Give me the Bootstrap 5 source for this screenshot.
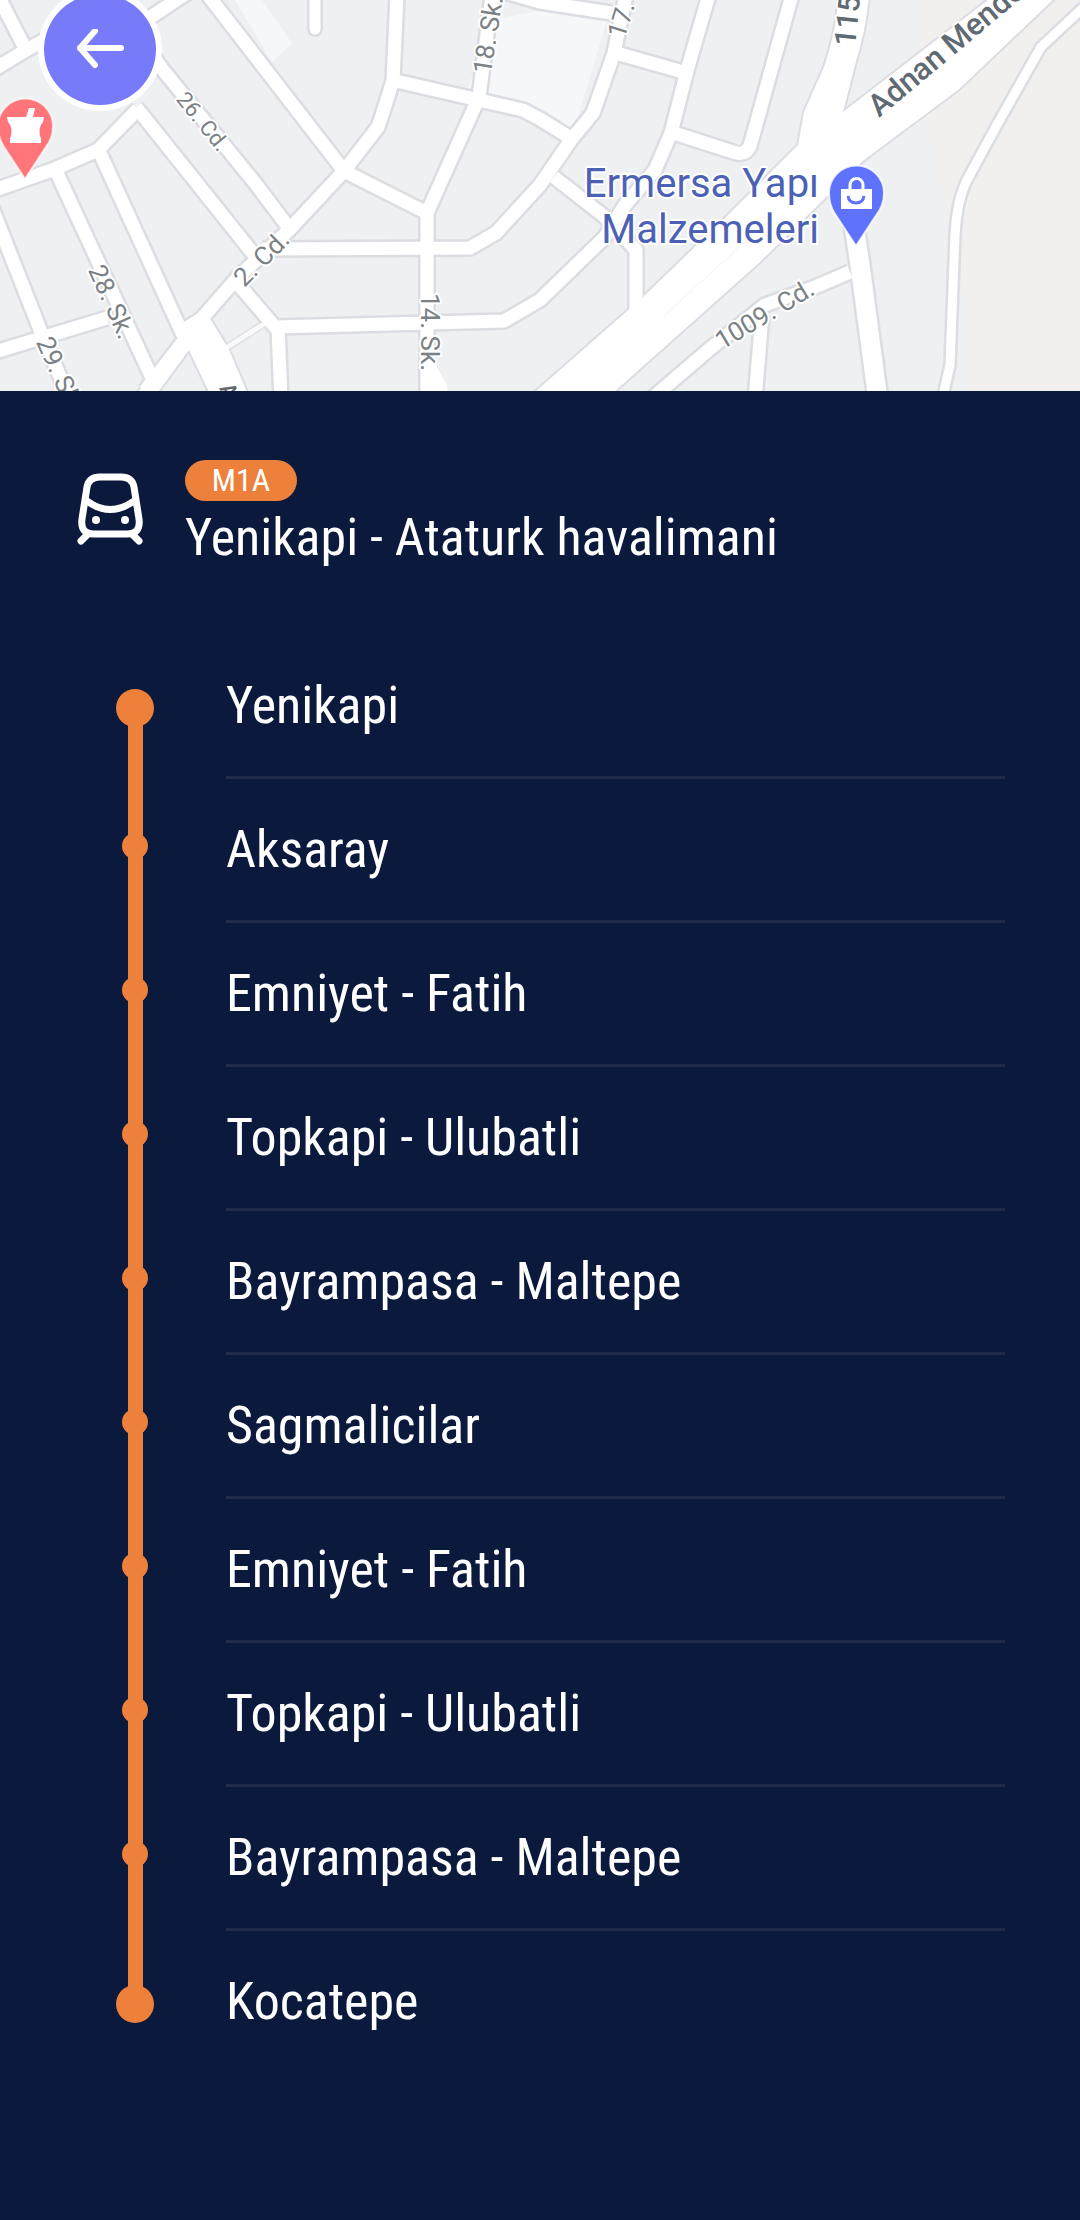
<!DOCTYPE html>
<html lang="tr">
<head>
<meta charset="utf-8">
<meta name="viewport" content="width=device-width, initial-scale=1">
<title>M1A Yenikapi - Ataturk havalimani</title>
<link href="https://cdn.jsdelivr.net/npm/bootstrap@5.3.0/dist/css/bootstrap.min.css" rel="stylesheet">
<style>
  body { background: #0b193d; color: #fff; font-family: "Roboto Condensed", "Liberation Sans Narrow", Roboto, sans-serif; font-size: 52px; line-height: 60px; }
  .map-pane { height: 391px; background: #eff0f2; }
  .map-pane > svg { display: block; }
  .map-label { font-family: Roboto, sans-serif; fill: #7b8185; stroke: #fff; stroke-width: 4px; stroke-linejoin: round; paint-order: stroke; }
  .map-label-major { fill: #5f6a72; font-weight: 500; }
  .map-label-place { fill: #4c61b5; }
  .back-btn { top: -12px; left: 38px; width: 124px; height: 123px; border: 6px solid #fff; background: #787bf9; }
  .back-btn:hover { background: #686bf0; border-color: #fff; }
  .line-head { padding: 69px 76px 67px; column-gap: 41px; }
  .line-icon { width: 68px; height: 76px; margin-top: 12px; }
  .line-badge { background: #ed803b; font-size: 32px; line-height: 41px; width: 112px; font-weight: 400; }
  .line-name { font-size: 52px; line-height: 60px; margin-top: 7px; font-weight: 400; }
  .stops { padding: 0 75px 140px 116px; }
  .stop { height: 144px; column-gap: 72px; }
  .stop-rail { width: 38px; background: linear-gradient(#ed803b, #ed803b) center / 15px 100% no-repeat; }
  .stop-dot { width: 26px; height: 26px; margin-top: 54px; background: #ed803b; }
  .stop:first-child .stop-dot, .stop:last-child .stop-dot { width: 38px; height: 38px; }
  .stop:first-child .stop-rail { background-position: center bottom; background-size: 15px 72px; }
  .stop:last-child .stop-rail { background-position: center top; background-size: 15px 72px; }
  .stop-name { border-bottom: 3px solid #202a4b; }
  .stop:last-child .stop-name { border-bottom-color: transparent; }
</style>
</head>
<body>
<header class="map-pane position-relative overflow-hidden">
  <svg width="100%" height="391" viewBox="0 0 1080 391" preserveAspectRatio="xMidYMid slice" role="img" aria-label="Harita">
    <defs>
      <g id="streets" fill="none" stroke-linejoin="round">
        <path d="M145 391 196 325 238 277 289 230 344 171 378 127 Q384 110 393 80L397 -5"/>
        <path d="M204 -10 344 171"/>
        <path d="M145 45 163 70 255 183 289 228"/>
        <path d="M136 107 255 256"/>
        <path d="M-5 190 52 170 98 150 138 109"/>
        <path d="M100 153 183 335"/>
        <path d="M57 173 152 378"/>
        <path d="M-15 190 43 337 70 400"/>
        <path d="M-5 352 107 318"/>
        <path d="M-5 -10 25 48M-5 69 28 49 60 32M140 24 190 -9"/>
        <path d="M396 81 479 100 523 110 540 119 569 137"/>
        <path d="M492 -5 479 97 427 213V400"/>
        <path d="M344 171 427 213"/>
        <path d="M262 249 470 248 496 233 540 185 571 140 593 113 614 53 626 -5"/>
        <path d="M239 285 275 327 504 321 540 300 605 237 625 205 655 170 671 133 688 67 709 -5"/>
        <path d="M278 327 281 400"/>
        <path d="M554 177 605 217 636 250V320"/>
        <path d="M616 53 683 72"/>
        <path d="M674 133 736 153Q746 155 750 146L792 -5"/>
        <path d="M505 -8 540 2 611 13"/>
        <path d="M650 400 712 347 765 305 815 287 850 272"/>
        <path d="M762 315 755 400"/>
      </g>
      <g id="avenues" stroke-linejoin="round">
        <path d="M988 0 843 112 855 65Q866 30 869 -5H838Q838 25 824 67L804 112 798 145 726 217 643 297 535 392H614L760 262 864 160 958 90 1058 -5Z"/>
        <path d="M184 322 200 312 211 320 229 350 247 392H209L189 350 158 392H138L182 335Z"/>
      </g>
      <path id="lane" fill="none" d="M851 205 860 265 878 400"/>
      <path id="track" fill="none" stroke-linejoin="round" d="M1085 6 1041 47 998 123 967 180Q957 200 955 235L950 365 943 396"/>
    </defs>
    <path fill="#f1f0ee" d="M918 0H1080V391H969L962 270 926 120Z"/>
    <path fill="#f5f7f9" d="M235 0H262L292 43 272 62ZM494 20 540 10 607 20 572 137 523 110 466 92Z"/>
    <path d="M315 -5V29" stroke="#dcdde2" stroke-width="16" stroke-linecap="round"/>
    <path d="M228 347 265 323" stroke="#dfe0e3" stroke-width="8"/>
    <use href="#streets" stroke="#dcdde2" stroke-width="18"/>
    <use href="#avenues" fill="#dcdde2" stroke="#dcdde2" stroke-width="4"/>
    <use href="#lane" stroke="#dcdde2" stroke-width="24"/>
    <use href="#track" stroke="#dcdde2" stroke-width="14"/>
    <path d="M315 -5V29" stroke="#fff" stroke-width="11" stroke-linecap="round"/>
    <path d="M226 348 267 322" stroke="#f9f9f9" stroke-width="5"/>
    <use href="#streets" stroke="#fff" stroke-width="13"/>
    <use href="#avenues" fill="#fff"/>
    <use href="#lane" stroke="#fff" stroke-width="19"/>
    <use href="#track" stroke="#fff" stroke-width="9"/>
    <path d="M427 350 447 385V391H427Z" fill="#fff"/>
    <path d="M665 315 760 228" stroke="#f1f2f3" stroke-width="1"/>

    <g class="map-label" font-size="26" text-anchor="middle">
      <text transform="translate(203 121) rotate(51)" y="8" font-size="22">26. Cd.</text>
      <text transform="translate(262 259) rotate(-45)" y="8">2. Cd.</text>
      <text transform="translate(111 302) rotate(66)" y="8">28. Sk.</text>
      <text transform="translate(59 374) rotate(66)" y="8">29. Sk.</text>
      <text transform="translate(429 332) rotate(90)" y="8">14. Sk.</text>
      <text transform="translate(489 35) rotate(-81)" y="8">18. Sk.</text>
      <text transform="translate(622 20) rotate(-73)" y="8">17.</text>
      <text transform="translate(765 315) rotate(-31)" y="8">1009. Cd.</text>
    </g>
    <g class="map-label map-label-major" font-size="31">
      <text transform="translate(855 47) rotate(-84)" font-size="30">115</text>
      <text transform="translate(879 118) rotate(-40)">Adnan Mende</text>
      <text transform="translate(219 388) rotate(62)" font-size="22">A</text>
    </g>
    <g class="map-label map-label-place" font-size="40" text-anchor="end">
      <text x="819" y="197">Ermersa Yapı</text>
      <text x="819" y="243">Malzemeleri</text>
    </g>
    <!-- pharmacy pin -->
    <path d="M25 179 4 147Q-2 138 -2 126A27 27 0 0 1 53 126Q53 138 46 147Z" fill="#ff7579" stroke="#fff" stroke-opacity=".7" stroke-width="2"/>
    <path d="M7 117H26L29 108H35L33 117H44L43 122Q37 128 41 139V143H10V139Q14 128 8 122Z" fill="#fff"/>
    <!-- shop pin -->
    <path d="M856 246 835 214Q829 205 829 193A27 27 0 0 1 884 193Q884 205 877 214Z" fill="#5e72fb" stroke="#fff" stroke-opacity=".8" stroke-width="2"/>
    <path d="M841 189H872V209H841Z" fill="#fff"/>
    <path d="M850 190V185A6 6 0 0 1 863 185V190" fill="none" stroke="#fff" stroke-width="3"/>
    <path d="M848 196Q849 203 856 203T864 196" fill="none" stroke="#5e72fb" stroke-width="3"/>
  </svg>
  <button type="button" class="back-btn btn rounded-circle position-absolute p-0 d-flex align-items-center justify-content-center" aria-label="Geri">
    <svg width="48" height="42" viewBox="0 0 48 42" fill="none" stroke="#fff" stroke-width="6" stroke-linecap="round" stroke-linejoin="round"><path d="M45 19H4M19 2 4 19 19 36"/></svg>
  </button>
</header>
<main>
  <section class="line-head d-flex align-items-start">
    <svg class="line-icon flex-shrink-0" viewBox="0 0 68 76" fill="none" stroke="#fff" stroke-width="7" stroke-linecap="round" stroke-linejoin="round" aria-hidden="true">
      <path d="M24 5H45Q56 5 58 15L63 47Q65 62 51 62H18Q4 62 6 47L11 15Q13 5 24 5Z"/>
      <path d="M11 29Q34 46 58 29M12 62 5 69M56 62 63 69"/>
      <circle cx="20" cy="48" r="4" fill="#fff" stroke="none"/><circle cx="49" cy="48" r="4" fill="#fff" stroke="none"/>
    </svg>
    <div>
      <span class="line-badge badge rounded-pill p-0 d-block">M1A</span>
      <h1 class="line-name mb-0">Yenikapi - Ataturk havalimani</h1>
    </div>
  </section>
  <ol class="stops list-unstyled mb-0">
    <li class="stop d-flex"><div class="stop-rail d-flex justify-content-center flex-shrink-0"><span class="stop-dot rounded-circle"></span></div><div class="stop-name flex-grow-1 d-flex align-items-center">Yenikapi</div></li>
    <li class="stop d-flex"><div class="stop-rail d-flex justify-content-center flex-shrink-0"><span class="stop-dot rounded-circle"></span></div><div class="stop-name flex-grow-1 d-flex align-items-center">Aksaray</div></li>
    <li class="stop d-flex"><div class="stop-rail d-flex justify-content-center flex-shrink-0"><span class="stop-dot rounded-circle"></span></div><div class="stop-name flex-grow-1 d-flex align-items-center">Emniyet - Fatih</div></li>
    <li class="stop d-flex"><div class="stop-rail d-flex justify-content-center flex-shrink-0"><span class="stop-dot rounded-circle"></span></div><div class="stop-name flex-grow-1 d-flex align-items-center">Topkapi - Ulubatli</div></li>
    <li class="stop d-flex"><div class="stop-rail d-flex justify-content-center flex-shrink-0"><span class="stop-dot rounded-circle"></span></div><div class="stop-name flex-grow-1 d-flex align-items-center">Bayrampasa - Maltepe</div></li>
    <li class="stop d-flex"><div class="stop-rail d-flex justify-content-center flex-shrink-0"><span class="stop-dot rounded-circle"></span></div><div class="stop-name flex-grow-1 d-flex align-items-center">Sagmalicilar</div></li>
    <li class="stop d-flex"><div class="stop-rail d-flex justify-content-center flex-shrink-0"><span class="stop-dot rounded-circle"></span></div><div class="stop-name flex-grow-1 d-flex align-items-center">Emniyet - Fatih</div></li>
    <li class="stop d-flex"><div class="stop-rail d-flex justify-content-center flex-shrink-0"><span class="stop-dot rounded-circle"></span></div><div class="stop-name flex-grow-1 d-flex align-items-center">Topkapi - Ulubatli</div></li>
    <li class="stop d-flex"><div class="stop-rail d-flex justify-content-center flex-shrink-0"><span class="stop-dot rounded-circle"></span></div><div class="stop-name flex-grow-1 d-flex align-items-center">Bayrampasa - Maltepe</div></li>
    <li class="stop d-flex"><div class="stop-rail d-flex justify-content-center flex-shrink-0"><span class="stop-dot rounded-circle"></span></div><div class="stop-name flex-grow-1 d-flex align-items-center">Kocatepe</div></li>
  </ol>
</main>
<script src="https://cdn.jsdelivr.net/npm/bootstrap@5.3.0/dist/js/bootstrap.bundle.min.js"></script>
</body>
</html>
